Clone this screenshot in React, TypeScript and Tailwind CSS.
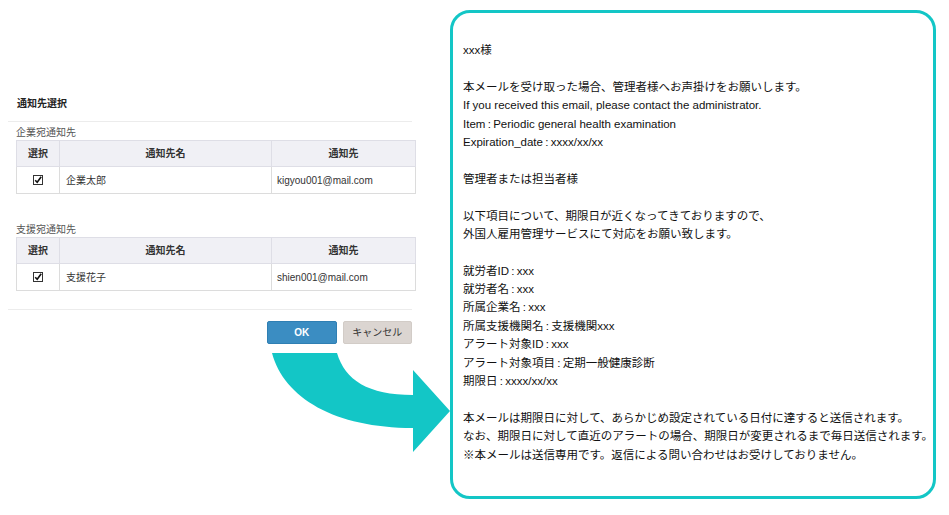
import React from "react";

const teal = "#13c6c6";

type Row = { name: string; mail: string };

function CheckMark() {
  return (
    <svg width="10" height="10" viewBox="0 0 10 10" className="mx-auto block">
      <rect x="0.5" y="0.5" width="9" height="9" fill="#fff" stroke="#333" strokeWidth="1" />
      <path d="M2.2 5.2 L4.2 7.3 L8.2 1.8" fill="none" stroke="#111" strokeWidth="1.6" />
    </svg>
  );
}

function NotifyTable({ label, row, className }: { label: string; row: Row; className?: string }) {
  return (
    <div className={className}>
      <div className="pl-2 text-[10px] leading-[14px] text-[#555]">{label}</div>
      <table className="mx-2 w-[400px] border-collapse text-[10px] text-[#333]">
        <thead>
          <tr className="h-[26px] bg-[#f0f0f5]">
            <th className="w-[43px] border border-[#dedee6] font-bold">選択</th>
            <th className="w-[212px] border border-[#dedee6] font-bold">通知先名</th>
            <th className="border border-[#dedee6] font-bold">通知先</th>
          </tr>
        </thead>
        <tbody>
          <tr className="h-[27px]">
            <td className="border border-[#dcdcdc]">
              <CheckMark />
            </td>
            <td className="border border-[#dcdcdc] pl-[6px]">{row.name}</td>
            <td className="border border-[#dcdcdc] pl-[5px]">{row.mail}</td>
          </tr>
        </tbody>
      </table>
    </div>
  );
}

const c = "\u2009:\u2009";

const mailLines: string[] = [
  "xxx様",
  "",
  "本メールを受け取った場合、管理者様へお声掛けをお願いします。",
  "If you received this email, please contact the administrator.",
  `Item${c}Periodic general health examination`,
  `Expiration_date${c}xxxx/xx/xx`,
  "",
  "管理者または担当者様",
  "",
  "以下項目について、期限日が近くなってきておりますので、",
  "外国人雇用管理サービスにて対応をお願い致します。",
  "",
  `就労者ID${c}xxx`,
  `就労者名${c}xxx`,
  `所属企業名${c}xxx`,
  `所属支援機関名${c}支援機関xxx`,
  `アラート対象ID${c}xxx`,
  `アラート対象項目${c}定期一般健康診断`,
  `期限日${c}xxxx/xx/xx`,
  "",
  "本メールは期限日に対して、あらかじめ設定されている日付に達すると送信されます。",
  "なお、期限日に対して直近のアラートの場合、期限日が変更されるまで毎日送信されます。",
  "※本メールは送信専用です。返信による問い合わせはお受けしておりません。",
];

export default function App() {
  return (
    <div
      className="relative flex h-[515px] w-[949px] overflow-hidden bg-white"
      style={{ fontFamily: '"Liberation Sans", "Noto Sans CJK JP", sans-serif' }}
    >
      {/* dialog */}
      <div className="w-[420px] shrink-0 px-2 pt-[97px]">
        <div className="h-[25px] border-b border-[#ececec] pl-[9px] text-[10px] font-bold leading-[14px] text-[#222]">
          通知先選択
        </div>
        <NotifyTable className="mt-[4px]" label="企業宛通知先" row={{ name: "企業太郎", mail: "kigyou001@mail.com" }} />
        <NotifyTable className="mt-[29px]" label="支援宛通知先" row={{ name: "支援花子", mail: "shien001@mail.com" }} />
        <div className="mt-[18px] border-t border-[#ececec]" />
        <div className="mt-[11px] flex gap-[6px] pl-[259px]">
          <button className="h-[23px] w-[70px] rounded-[2px] border border-[#2f7fb3] bg-[#3b8dc2] text-[10px] font-bold text-white">
            OK
          </button>
          <button className="h-[23px] w-[70px] rounded-[2px] border border-[#d2ccc7] bg-[#dbd5d1] text-[10px] text-[#333]">
            キャンセル
          </button>
        </div>
      </div>

      {/* mail body */}
      <div className="ml-[30px] mt-[10px] h-[489px] w-[486px] shrink-0 rounded-[20px] border-[3px] border-[#13c6c6] pl-[10px] pt-[28px] text-[11.5px] leading-[18.4px] text-[#111]">
        {mailLines.map((line, i) => (
          <div key={i} className="h-[18.4px] whitespace-nowrap">
            {line}
          </div>
        ))}
      </div>

      {/* curved arrow */}
      <svg className="pointer-events-none absolute left-0 top-0" width="949" height="515">
        <path
          d="M272 353 L337 353 C345 380 368 395 413 395 L413 370 L450 411 L413 452 L413 428 C335 428 284 398 272 353 Z"
          fill={teal}
        />
      </svg>
    </div>
  );
}
